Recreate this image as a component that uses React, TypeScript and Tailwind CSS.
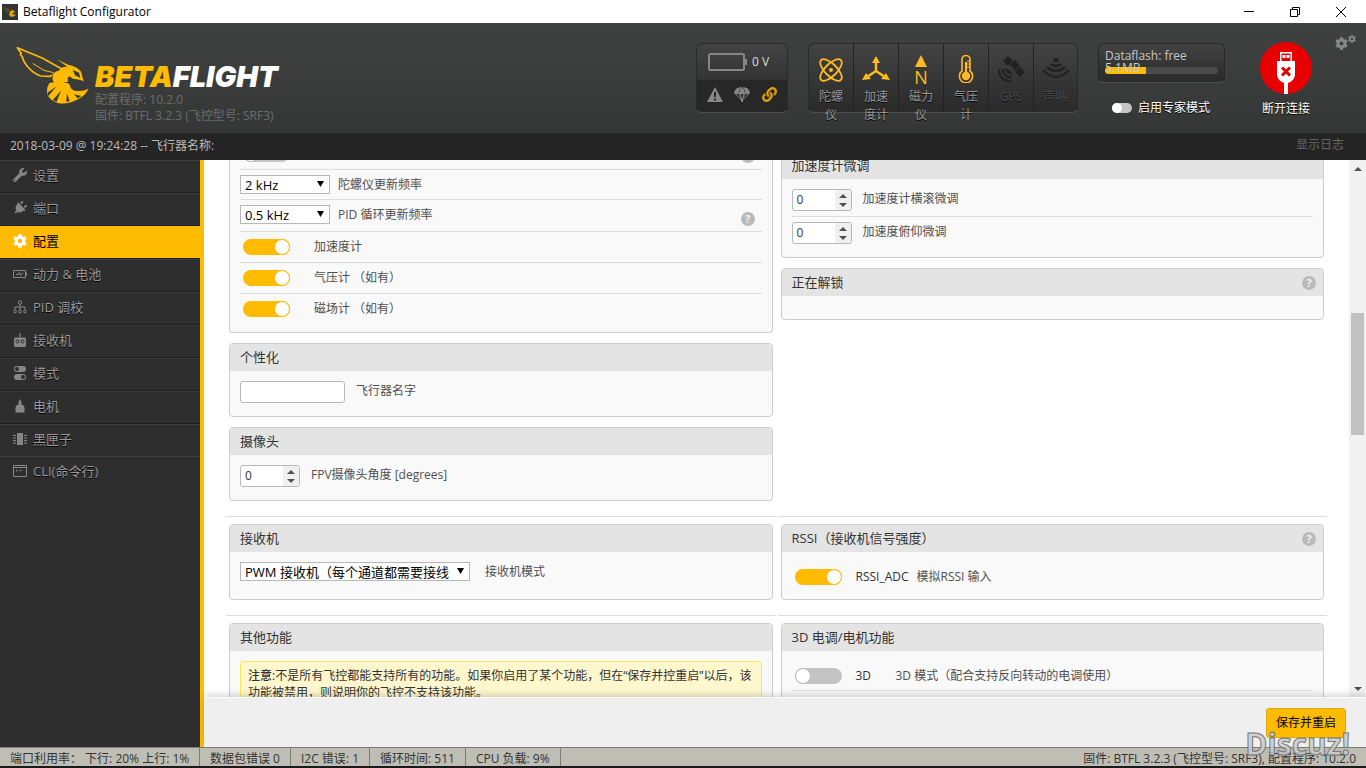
import React from "react";
import { FaCog, FaLink, FaPlug, FaWrench } from "react-icons/fa";

const BeeLogo = ({ className }: { className?: string }) => (
  <svg viewBox="46 138 220 174" className={className} fill="none" aria-hidden="true">
    <path
      d="M50 143L125 174L184 207L178 215L150 229L120 228Q99 221 82 201Q67 183 65 170L59 164L62 160Z"
      stroke="#ffbb00"
      strokeWidth="5"
      strokeLinejoin="round"
    />
    <path d="M96 190L130 211L160 218" stroke="#ffbb00" strokeWidth="3" />
    <path
      d="M170 178L201 193Q231 199 242 215L250 244Q240 238 218 236L207 229Q199 233 203 245L193 247Q187 256 178 254L163 250Q149 238 157 224Q165 212 176 212Q183 198 202 201Z"
      fill="#ffbb00"
    />
    <path d="M217 209L236 218L240 234L224 226Z" fill="#3a3c3b" />
    <path d="M157 226Q150 239 163 253" stroke="#3a3c3b" strokeWidth="3" />
    <path
      d="M147 249Q168 244 181 252Q194 244 207 252Q209 264 218 271Q244 278 265 266Q255 288 233 298Q205 314 174 310Q148 302 140 283Q137 262 147 249Z"
      fill="#ffbb00"
    />
    <path d="M140 279L169 258L144 288M157 300L182 272L168 306M198 306L199 280L208 303M232 296L221 283L243 288" fill="#3a3c3b" />
  </svg>
);

const GyroIcon = () => (
  <svg viewBox="0 0 28 28" className="w-7 h-7 shrink-0" fill="none" stroke="currentColor" strokeWidth="1.8">
    <ellipse cx="14" cy="15" rx="14" ry="6" transform="rotate(45 14 15)" />
    <ellipse cx="14" cy="15" rx="14" ry="6" transform="rotate(-45 14 15)" />
    <circle cx="14" cy="15" r="2" fill="currentColor" stroke="none" />
  </svg>
);

const AccelIcon = () => (
  <svg viewBox="0 0 28 28" className="w-7 h-7 shrink-0" fill="currentColor">
    <path d="M14 6V17M14 16L5 22M14 16L23 22" stroke="currentColor" strokeWidth="2.5" />
    <path d="M14 1L18 8H10ZM0 25L4 18L9 24ZM28 25L24 18L19 24Z" />
  </svg>
);

const MagIcon = () => (
  <span className="flex flex-col items-center w-7 h-7 shrink-0">
    <svg viewBox="0 0 14 12" className="w-3.5 h-3 shrink-0" fill="currentColor">
      <path d="M7 0L13 12H1Z" />
    </svg>
    <span className="text-[18px] leading-5">N</span>
  </span>
);

const BaroIcon = () => (
  <svg viewBox="0 0 28 28" className="w-7 h-7 shrink-0" fill="none" stroke="currentColor" strokeWidth="1.6">
    <path d="M10 16V4.500a4 4 0 0 1 8 0V16a6.600 6.600 0 1 1-8 0Z" />
    <circle cx="14" cy="21" r="4.200" fill="currentColor" stroke="none" />
    <path d="M14 7V20" strokeWidth="2.200" />
    <path d="M15 6h3M15 9h3M15 12h3" strokeWidth="1" />
  </svg>
);

const GpsIcon = () => (
  <svg viewBox="0 0 28 28" className="w-7 h-7 shrink-0" fill="currentColor">
    <path d="M6 6L11 1L16 6L11 11ZM18 17L23 12L28 17L23 22ZM13 10L18 5L23 11L18 16Z" />
    <path d="M8 13Q15 15 16 21L12 18Q10 20 8 13Z" />
    <path d="M2 14Q2 26 14 26M6 14Q6 22 14 22" fill="none" stroke="currentColor" strokeWidth="2" />
  </svg>
);

const SonarIcon = () => (
  <svg viewBox="0 0 28 28" className="w-7 h-7 shrink-0" fill="none" stroke="currentColor" strokeWidth="2.500">
    <circle cx="14" cy="5" r="2.500" fill="currentColor" stroke="none" />
    <path d="M9 9Q14 13 19 9M5 12Q14 20 23 12M1 15Q14 29 27 15" />
  </svg>
);

const sensors = [
  { label: "陀螺仪", icon: <GyroIcon />, active: true },
  { label: "加速度计", icon: <AccelIcon />, active: true },
  { label: "磁力仪", icon: <MagIcon />, active: true },
  { label: "气压计", icon: <BaroIcon />, active: true },
  { label: "GPS", icon: <GpsIcon />, active: false },
  { label: "声呐", icon: <SonarIcon />, active: false },
];

const NavSvg = ({ children }: { children: React.ReactNode }) => (
  <svg viewBox="0 0 14 14" className="w-3.5 h-3.5" fill="none" stroke="currentColor">
    {children}
  </svg>
);

const tabs = [
  { label: "设置", icon: <FaWrench className="w-3.5 h-3.5" /> },
  { label: "端口", icon: <FaPlug className="w-3.5 h-3.5 rotate-45" /> },
  { label: "配置", icon: <FaCog className="w-3.5 h-3.5" /> },
  {
    label: "动力 & 电池",
    icon: (
      <NavSvg>
        <path d="M.5 3.500H12.500V10.500H.5ZM3 7.500H5L6 5.500L7.500 8.500L8.500 6.500H10" />
        <path d="M13.500 5.500V8.500" />
      </NavSvg>
    ),
  },
  {
    label: "PID 调校",
    icon: (
      <NavSvg>
        <circle cx="7" cy="2.500" r="1.700" />
        <path d="M7 4V10M2 10V7H12V10" />
        <circle cx="2" cy="11.500" r="1.400" />
        <circle cx="7" cy="11.500" r="1.400" />
        <circle cx="12" cy="11.500" r="1.400" />
      </NavSvg>
    ),
  },
  {
    label: "接收机",
    icon: (
      <NavSvg>
        <path d="M7 0V5" strokeWidth="1.200" />
        <path
          d="M2 4.500H12Q13 4.500 13 6V12.500Q13 14 12 14H2Q1 14 1 12.500V6Q1 4.500 2 4.500Z"
          fill="currentColor"
          stroke="none"
        />
        <circle cx="4.500" cy="8.500" r="1.500" stroke="#2e2e2e" />
        <circle cx="9.500" cy="8.500" r="1.500" stroke="#2e2e2e" />
      </NavSvg>
    ),
  },
  {
    label: "模式",
    icon: (
      <NavSvg>
        <rect x="1" y="0" width="12" height="6" rx="3" fill="currentColor" stroke="none" />
        <rect x="1" y="8" width="12" height="6" rx="3" fill="currentColor" stroke="none" />
        <circle cx="4" cy="3" r="2" fill="#2e2e2e" stroke="none" />
        <circle cx="10" cy="11" r="2" fill="#2e2e2e" stroke="none" />
      </NavSvg>
    ),
  },
  {
    label: "电机",
    icon: (
      <NavSvg>
        <path
          d="M7 0L8.500 3V6H10Q11.500 7 11.500 9V13.500H2.500V9Q2.500 7 4 6H5.500V3Z"
          fill="currentColor"
          stroke="none"
        />
      </NavSvg>
    ),
  },
  {
    label: "黑匣子",
    icon: (
      <NavSvg>
        <rect x="4" y="1" width="6" height="12" fill="currentColor" stroke="none" />
        <path d="M0 3.500H3M0 6H3M0 8.500H3M0 11H3M11 3.500H14M11 6H14M11 8.500H14M11 11H14" />
      </NavSvg>
    ),
  },
  {
    label: "CLI(命令行)",
    icon: (
      <NavSvg>
        <path d="M.5 1.500H13.500V12.500H.5ZM.5 3.500H13.500" />
        <path d="M3 5.500L4.500 6.500L3 7.500M6 6.500H9" strokeWidth=".8" />
      </NavSvg>
    ),
  },
];

const Help = ({ className = "" }: { className?: string }) => (
  <button
    type="button"
    aria-label="?"
    className={`ml-auto mr-[7px] w-3.5 h-3.5 shrink-0 rounded-full bg-[#bababa] text-[#f4f4f4] text-[11px] leading-3.5 font-bold text-center ${className}`}
  >
    ?
  </button>
);

const Panel = ({
  title,
  help,
  className = "",
  children,
}: {
  title: string;
  help?: boolean;
  className?: string;
  children?: React.ReactNode;
}) => (
  <section className="mx-[3px] border border-[#ccc] rounded-sm bg-[#f9f9f9] overflow-hidden">
    <div className="h-[27px] pl-2.5 flex items-center bg-[#e4e4e4]">
      <h2 className="pb-0.5 text-[13px] leading-5 text-[#333]">{title}</h2>
      {help && <Help />}
    </div>
    <div className={`px-2.5 pt-2.5 ${className}`}>{children}</div>
  </section>
);

const Toggle = ({ id, on = false }: { id: string; on?: boolean }) => (
  <input
    id={id}
    type="checkbox"
    defaultChecked={on}
    className="appearance-none ml-[3px] w-[47px] h-4 shrink-0 rounded-full bg-[#c4c4c4] checked:bg-[#ffbb00] flex checked:justify-end before:block before:w-4 before:h-4 before:rounded-full before:bg-white before:border before:border-[#bbb] checked:before:border-[#ffbb00]"
  />
);

const Select = ({ id, value, wide }: { id: string; value: string; wide?: boolean }) => (
  <div className={`relative h-[19px] ${wide ? "w-[230px]" : "w-[90px]"}`}>
    <select
      id={id}
      className="appearance-none block w-full h-full pl-1 pr-5 border border-[#b8b8b8] bg-white text-[13px] leading-4 text-black"
    >
      <option>{value}</option>
    </select>
    <svg viewBox="0 0 7 6" className="absolute right-1.5 top-1.5 w-[7px] h-1.5 pointer-events-none">
      <path d="M0 0H7L3.500 6Z" fill="#000" />
    </svg>
  </div>
);

const NumberField = ({ id, label }: { id: string; label: string }) => (
  <div className="flex items-center gap-[11px]">
    <div className="relative flex w-[60px] h-[22px] border border-[#b8b8b8] rounded-[3px] bg-white overflow-hidden">
      <input
        id={id}
        type="number"
        defaultValue={0}
        className="w-full pl-1 text-xs text-[#333] [appearance:textfield] [&::-webkit-inner-spin-button]:appearance-none"
      />
      <svg viewBox="0 0 16 20" className="w-4 h-5 shrink-0 bg-[#f0f0f0] pointer-events-none">
        <path d="M4 8L8 4L12 8ZM4 13L8 17L12 13Z" fill="#505050" />
      </svg>
    </div>
    <label htmlFor={id} className="pb-0.5 text-xs leading-5">
      {label}
    </label>
  </div>
);

const ToggleRow = ({ id, label, last }: { id: string; label: string; last?: boolean }) => (
  <div className={`h-[31px] flex items-center gap-6 ${last ? "pb-0.5" : "border-b border-[#ddd]"}`}>
    <Toggle id={id} on />
    <label htmlFor={id}>{label}</label>
  </div>
);

const Divider = () => <hr className="border-t border-[#ddd] mt-[15px] mb-[7px]" />;

function TitleBar() {
  return (
    <div className="h-[23px] shrink-0 flex items-center bg-white px-0.5 text-black">
      <span className="w-4 h-4 flex items-center justify-center bg-[#333]">
        <BeeLogo className="w-3 h-3" />
      </span>
      <span className="ml-[5px] text-xs leading-5">Betaflight Configurator</span>
      <div className="ml-auto flex">
        <button type="button" aria-label="最小化" className="w-[46px] h-[22px] flex items-center justify-center">
          <svg viewBox="0 0 10 10" className="w-2.5 h-2.5" stroke="#000">
            <path d="M0 4.500H10" />
          </svg>
        </button>
        <button type="button" aria-label="还原" className="w-[46px] h-[22px] flex items-center justify-center">
          <svg viewBox="0 0 10 10" className="w-2.5 h-2.5" fill="none" stroke="#000">
            <path d="M.5 2.500H7.500V9.500H.5ZM2.500 2.500V.5H9.500V7.500H7.500" />
          </svg>
        </button>
        <button type="button" aria-label="关闭" className="w-[46px] h-[22px] flex items-center justify-center">
          <svg viewBox="0 0 10 10" className="w-2.5 h-2.5" stroke="#000">
            <path d="M0 0L10 10M10 0L0 10" />
          </svg>
        </button>
      </div>
    </div>
  );
}

function Header() {
  return (
    <header className="h-[110px] shrink-0 flex items-start pl-4 pr-[11px] bg-linear-to-b from-[#3f4241] to-[#353736]">
      <BeeLogo className="mt-[23px] w-[73px] h-[58px] shrink-0" />
      <div className="ml-1.5 mt-10 text-xs leading-4 text-[#6b6d6c]">
        <div className="mb-px font-[Inter] font-black italic text-[29px] leading-7 text-white">
          <span className="text-[#ffbb00]">BETA</span>FLIGHT
        </div>
        <p>配置程序: 10.2.0</p>
        <p>固件: BTFL 3.2.3 (飞控型号: SRF3)</p>
      </div>

      <div className="ml-auto mt-5 w-[92px] h-[70px] shrink-0 border border-[#2a2a2a] border-b-[#505050] rounded-md overflow-hidden">
        <div className="h-9 pl-[11px] flex items-center gap-[5px] bg-linear-to-b from-[#434343] to-[#333] text-xs text-[#ddd]">
          <svg viewBox="0 0 39 18" className="w-[39px] h-[18px]" fill="none">
            <rect x="1" y="1" width="35" height="16" rx="1.500" stroke="#868686" strokeWidth="2" />
            <path d="M37 6H39V12H37Z" fill="#868686" />
          </svg>
          0 V
        </div>
        <div className="h-8 pb-1 flex items-center justify-around px-1 bg-[#272727] text-[#868686]">
          <svg viewBox="0 0 16 15" className="w-4 h-[15px]">
            <path d="M8 0L16 15H0Z" fill="currentColor" />
            <path d="M7 5H9V10H7ZM7 11.500H9V13.500H7Z" fill="#272727" />
          </svg>
          <svg viewBox="0 0 16 15" className="w-4 h-[15px]">
            <path d="M0 6Q1 0 8 0T16 6L9 13V15H7V13Z" fill="currentColor" />
            <path d="M2 7L7 12L5 7ZM14 7L9 12L11 7ZM6.500 7L8 12L9.500 7" fill="#272727" />
            <path d="M5 6Q5 2 8 0Q11 2 11 6" fill="none" stroke="#272727" strokeWidth=".6" />
          </svg>
          <FaLink className="w-[15px] h-[15px] text-[#d8a010]" />
        </div>
      </div>

      <ul className="ml-5 mt-5 h-[70px] shrink-0 flex rounded-md border border-[#2a2a2a] border-b-[#505050] bg-linear-to-b from-[#434343] to-[#2a2a2a]">
        {sensors.map((s) => (
          <li
            key={s.label}
            className={`w-[45px] h-[68px] pt-[11px] flex flex-col items-center border-r border-[#222] last:w-[43px] last:border-r-0 ${
              s.active ? "text-[#ffbb22]" : "text-[#222]"
            }`}
          >
            {s.icon}
            <span
              className={`mt-[5px] w-7 text-xs leading-[18px] text-center ${
                s.active ? "text-[#999] [text-shadow:0_1px_#000]" : "text-[#4a4a4a] [text-shadow:0_1px_#111]"
              }`}
            >
              {s.label}
            </span>
          </li>
        ))}
      </ul>

      <div className="ml-5 mt-5 w-[127px] shrink-0">
        <div className="relative h-10 px-1.5 rounded-md border border-[#272727] border-b-[#505050] bg-linear-to-b from-[#434343] to-[#2a2a2a]">
          <div className="mt-[23px] h-[7px] rounded-full bg-[#4a4a4a] overflow-hidden">
            <div className="h-full bg-[#ffbb00]" style={{ width: "36%" }} />
          </div>
          <p className="absolute left-1.5 top-1.5 w-[115px] text-xs leading-3 text-[#c8c8c8]">Dataflash: free 5.1MB</p>
        </div>
        <label className="mt-[15px] ml-3.5 flex items-center gap-1.5 text-xs leading-5 text-white [text-shadow:0_1px_#000]">
          <input
            type="checkbox"
            className="appearance-none w-5 h-2.5 rounded-full bg-[#c4c4c4] flex before:block before:w-2.5 before:h-2.5 before:rounded-full before:bg-white"
          />
          启用专家模式
        </label>
      </div>

      <button
        type="button"
        className="ml-[35px] mt-[19px] w-[52px] shrink-0 flex flex-col items-center text-xs leading-5 text-white whitespace-nowrap [text-shadow:0_1px_#000]"
      >
        <svg viewBox="0 0 52 52" className="w-[52px] h-[52px] mb-[5px]">
          <circle cx="26" cy="26" r="26" fill="#e60000" />
          <path d="M20 10H32V19H35V33Q34 39 28 41V52H24V41Q18 39 17 33V19H20Z" fill="#fff" />
          <path d="M21.500 11.500H30.500V19H21.500Z" fill="#e60000" />
          <path d="M22.500 13H25.500V16H22.500ZM26.500 13H29.500V16H26.500Z" fill="#fff" />
          <path d="M22 25.500L30 33.500M30 25.500L22 33.500" stroke="#e60000" strokeWidth="3" />
        </svg>
        断开连接
      </button>

      <button type="button" aria-label="选项" className="ml-[23px] mt-3 w-5 h-4 shrink-0 flex text-[#868a88]">
        <FaCog className="w-[13px] h-[13px] mt-0.5 shrink-0" />
        <FaCog className="w-2 h-2 shrink-0" />
      </button>
    </header>
  );
}

function Sidebar() {
  return (
    <nav className="w-[204px] shrink-0 bg-[#2e2e2e] border-r-4 border-[#ffbb00]">
      {tabs.map((t) => (
        <a
          key={t.label}
          href="#"
          className={`h-[33px] flex items-center gap-1.5 border-t border-b pl-[13px] pb-1 text-[13px] leading-5 ${
            t.label === "配置"
              ? "bg-[#ffbb00] border-t-[#ffbb00] border-b-[#222] text-black"
              : "border-t-[#3c3c3c] border-b-[#1f1f1f] text-[#999] [text-shadow:0_1px_#000] nth-9:h-8 nth-9:border-b-0 last:border-b-0"
          }`}
        >
          <span className={t.label === "配置" ? "text-white" : "text-[#868686]"}>{t.icon}</span>
          {t.label}
        </a>
      ))}
    </nav>
  );
}

function Configuration() {
  return (
    <div className="flex-1 min-w-0 overflow-hidden pl-[22px] pr-[22px]">
      {/* page is scrolled down, the first rows are cut by the status line */}
      <div className="-mt-[21px] grid grid-cols-2 gap-x-0.5 text-xs leading-5 text-[#4f4f4f]">
        <div className="flex flex-col gap-2.5">
          <section className="mx-[3px] px-2.5 pb-[7px] border border-t-0 border-[#ccc] rounded-b-sm bg-[#f9f9f9]">
            <div className="h-[31px] flex items-center border-b border-[#ddd]">
              <Toggle id="decimals" />
              <Help className="mt-1" />
            </div>
            <div className="h-[30px] flex items-center gap-2 border-b border-[#ddd]">
              <Select id="gyro" value="2 kHz" />
              <label htmlFor="gyro">陀螺仪更新频率</label>
            </div>
            <div className="h-8 pb-0.5 flex items-center gap-2 border-b border-[#ddd]">
              <Select id="pid" value="0.5 kHz" />
              <label htmlFor="pid">PID 循环更新频率</label>
              <Help className="mt-2" />
            </div>
            <ToggleRow id="acc" label="加速度计" />
            <ToggleRow id="baro" label="气压计 （如有）" />
            <ToggleRow id="mag" label="磁场计 （如有）" last />
          </section>

          <Panel title="个性化" className="pb-[13px]">
            <div className="flex items-center gap-[11px]">
              <input
                id="craft"
                type="text"
                className="w-[105px] h-[22px] px-1 border border-[#b8b8b8] rounded-[3px] bg-white"
              />
              <label htmlFor="craft" className="pb-0.5">
                飞行器名字
              </label>
            </div>
          </Panel>

          <Panel title="摄像头" className="pb-[13px]">
            <NumberField id="fpv" label="FPV摄像头角度 [degrees]" />
          </Panel>
        </div>

        <div className="flex flex-col gap-2.5 pt-3">
          <Panel title="加速度计微调" className="pb-[13px]">
            <div className="pb-[5px] mb-[5px] border-b border-[#ddd]">
              <NumberField id="roll" label="加速度计横滚微调" />
            </div>
            <NumberField id="pitch" label="加速度俯仰微调" />
          </Panel>
          <Panel title="正在解锁" help className="pb-[13px]" />
        </div>

        <div>
          <Divider />
          <Panel title="接收机" className="pb-[18px]">
            <div className="h-[19px] flex items-center gap-[15px]">
              <Select id="rx" value="PWM 接收机（每个通道都需要接线）" wide />
              <label htmlFor="rx">接收机模式</label>
            </div>
          </Panel>
        </div>

        <div>
          <Divider />
          <Panel title="RSSI（接收机信号强度）" help className="pb-2">
            <div className="h-[29px] flex items-center">
              <Toggle id="rssi" on />
              <label htmlFor="rssi" className="ml-3.5 flex">
                <span className="w-[61px] text-[#333]">RSSI_ADC</span>模拟RSSI 输入
              </label>
            </div>
          </Panel>
        </div>

        <div>
          <Divider />
          <Panel title="其他功能">
            <p className="px-[7px] pt-[5px] pb-2 border border-[#ffe55f] rounded-[3px] bg-[#fff7cd] leading-[17px] text-[#333]">
              <strong className="font-medium">注意:</strong>
              不是所有飞控都能支持所有的功能。如果你启用了某个功能，但在“保存并控重启”以后，该功能被禁用，则说明你的飞控不支持该功能。
            </p>
          </Panel>
        </div>

        <div>
          <Divider />
          <Panel title="3D 电调/电机功能" className="pb-5">
            <div className="h-[30px] flex items-center border-b border-[#ddd]">
              <Toggle id="mode3d" />
              <label htmlFor="mode3d" className="ml-3.5 flex">
                <span className="w-10 text-[#333]">3D</span>3D 模式（配合支持反向转动的电调使用）
              </label>
            </div>
          </Panel>
        </div>
      </div>
    </div>
  );
}

function ScrollBar() {
  return (
    <div className="w-[17px] shrink-0 py-1.5 flex flex-col items-center bg-[#f1f1f1]">
      <svg viewBox="0 0 8 4" className="w-2 h-1 mt-px">
        <path d="M0 4L4 0L8 4Z" fill="#505050" />
      </svg>
      <div className="flex-1 w-[13px] flex flex-col">
        <div className="basis-[27.5%]" />
        <div className="basis-[23.7%] bg-[#c1c1c1]" />
      </div>
      <svg viewBox="0 0 8 4" className="w-2 h-1">
        <path d="M0 0L4 4L8 0Z" fill="#505050" />
      </svg>
    </div>
  );
}

function StatusBar() {
  const items = ["数据包错误 0", "I2C 错误: 1", "循环时间: 511", "CPU 负载: 9%"];
  return (
    <footer className="h-[21px] shrink-0 flex border-t border-t-[#7d7d78] border-b-2 border-b-[#1a1a1a] bg-[#bfbeb5] text-xs leading-[22px] text-[#333] whitespace-nowrap">
      <span className="w-[200px] pl-2.5 border-r border-[#7d7d78]">端口利用率： 下行: 20% 上行: 1%</span>
      {items.map((i) => (
        <span key={i} className="px-2.5 border-r border-[#7d7d78]">
          {i}
        </span>
      ))}
      <span className="ml-auto pr-2.5">固件: BTFL 3.2.3 (飞控型号: SRF3), 配置程序: 10.2.0</span>
    </footer>
  );
}

export default function App() {
  return (
    <div className="relative h-screen flex flex-col overflow-hidden bg-white font-['Open_Sans','Noto_Sans_CJK_SC',sans-serif]">
      <TitleBar />
      <Header />
      <div className="h-[27px] shrink-0 pl-2.5 pr-[22px] pb-0.5 flex items-center justify-between bg-[#242424] text-xs leading-5">
        <span className="text-[#bbb]">2018-03-09 @ 19:24:28 -- 飞行器名称:</span>
        <button type="button" className="pb-0.5 text-[#666]">
          显示日志
        </button>
      </div>
      <div className="flex-1 min-h-0 flex">
        <Sidebar />
        <main className="flex-1 min-w-0 flex flex-col">
          <div className="flex-1 min-h-0 flex">
            <Configuration />
            <ScrollBar />
          </div>
          <div className="relative h-[50px] shrink-0 pr-5 pt-2.5 flex items-start justify-end bg-[#efefef] border-t border-white shadow-[0_-3px_6px_rgba(0,0,0,0.14)]">
            <button
              type="button"
              className="w-20 h-[30px] rounded-[3px] border border-[#dba718] bg-[#ffbb00] text-xs text-black"
            >
              保存并重启
            </button>
          </div>
        </main>
      </div>
      <StatusBar />
      <div className="absolute right-4 bottom-1 font-['Open_Sans'] font-bold text-[30px] leading-10 text-[#cccccc]/85 [-webkit-text-stroke:1px_#777777] pointer-events-none">
        Discuz!
      </div>
    </div>
  );
}
